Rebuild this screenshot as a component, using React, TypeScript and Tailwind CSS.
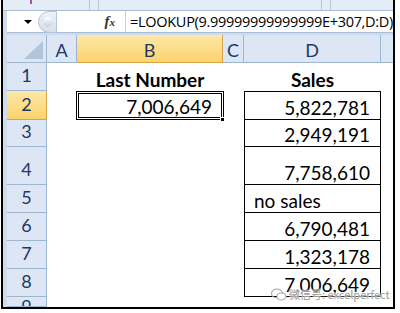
import React from "react";

const hdr = "flex items-center justify-center bg-[#dce6f4] border-r border-b border-[#9eb6ce] text-[18px] text-[#1f3864]";
const sel = "flex items-center justify-center bg-gradient-to-b from-[#fde8a6] to-[#fbd36b] border-r border-b border-[#d9a54a] text-[18px] text-[#1f3864]";
const cell = "flex items-end text-[19px] text-black leading-none pb-[2px]";
const dCell = "flex items-end justify-end pr-[10px] border-x border-b border-black text-[19px] text-black leading-none pb-[2px]";

const rows = [
  { n: "1", h: "h-[28px]" },
  { n: "2", h: "h-[29px]" },
  { n: "3", h: "h-[27px]" },
  { n: "4", h: "h-[38px]" },
  { n: "5", h: "h-[28px]" },
  { n: "6", h: "h-[28px]" },
  { n: "7", h: "h-[28px]" },
  { n: "8", h: "h-[28px]" },
];

const sales: Record<string, string> = {
  "2": "5,822,781",
  "3": "2,949,191",
  "4": "7,758,610",
  "5": "no sales",
  "6": "6,790,481",
  "7": "1,323,178",
  "8": "7,006,649",
};

const App: React.FC = () => {
  return (
    <div className="w-[400px] h-[313px] bg-white overflow-hidden" style={{ fontFamily: "Lato, 'Liberation Sans', sans-serif" }}>
      <div className="relative ml-[1px] w-[394px] h-[309px] border-l-2 border-r-2 border-b-2 border-black bg-[#cfdcee] flex flex-col overflow-hidden">
        {/* ribbon remnant */}
        <div className="h-[11px] flex bg-[#e4ecf7] border-b border-[#a9bdd6]">
          <div className="w-[27px]" />
          <div className="w-[2px] h-[4px] bg-[#9a5aa8]" />
          <div className="w-[57px]" />
          <div className="w-px h-[10px] bg-[#b7c8dd]" />
          <div className="w-[8px]" />
          <div className="w-px h-[10px] bg-[#b7c8dd]" />
          <div className="w-[222px]" />
          <div className="w-px h-[10px] bg-[#b7c8dd]" />
          <div className="w-[8px]" />
          <div className="w-px h-[10px] bg-[#b7c8dd]" />
        </div>

        {/* formula bar */}
        <div className="h-[22px] flex bg-white border-b border-[#a9bdd6] ml-[4px]">
          <div className="w-[31px] flex items-center justify-end pr-[6px]">
            <div className="w-0 h-0 border-l-[4px] border-r-[4px] border-t-[4px] border-l-transparent border-r-transparent border-t-black" />
          </div>
          <div className="w-[19px] h-[22px] rounded-l-full bg-gradient-to-b from-[#eef2f8] to-[#d6dfeb] border border-[#b5c4d8] flex items-center pl-[4px]">
            <div className="w-[10px] h-[10px] rounded-full bg-gradient-to-b from-[#ffffff] to-[#c6d1df]" />
          </div>
          <div className="w-[69px] flex items-center justify-end pr-[10px]">
            <span className="text-[15px] italic font-bold text-[#333]" style={{ fontFamily: "'Liberation Serif', serif" }}>
              f<span className="text-[11px]">x</span>
            </span>
          </div>
          <div className="w-px bg-[#c5d2e2]" />
          <div className="flex-1 flex items-center pl-[4px] text-[14.5px] text-black whitespace-nowrap" style={{ fontFamily: "'Open Sans', sans-serif", letterSpacing: "-0.3px" }}>
            =LOOKUP(9.99999999999999E+307,D:D)
          </div>
        </div>

        <div className="h-[2px]" />

        {/* grid */}
        <div className="ml-[4px] flex-1 grid grid-cols-[40px_30px_146px_21px_137px_1fr] bg-white content-start">
          {/* header row */}
          <div className="h-[28px] bg-[#dce6f4] border-r border-b border-[#9eb6ce] flex items-end justify-end pr-[3px] pb-[3px]">
            <svg width="19" height="18" viewBox="0 0 19 18">
              <polygon points="19,0 19,18 0,18" fill="#b3c4d9" />
            </svg>
          </div>
          <div className={`${hdr} h-[28px] pt-[3px]`}>A</div>
          <div className={`${sel} h-[28px] pt-[3px]`}>B</div>
          <div className={`${hdr} h-[28px] pt-[3px]`}>C</div>
          <div className={`${hdr} h-[28px] pt-[3px]`}>D</div>
          <div className={`${hdr} h-[28px] border-r-0`} />

          {rows.map((r) => (
            <React.Fragment key={r.n}>
              <div className={`${r.n === "2" ? sel : hdr} ${r.h} items-end pb-[1px]`}>{r.n}</div>
              <div className={r.h} />
              {r.n === "1" ? (
                <div className={`${cell} ${r.h} justify-center font-bold`}>Last Number</div>
              ) : r.n === "2" ? (
                <div className={`${r.h} relative`}>
                  <div className="absolute -left-px top-0 w-[148px] h-[29px] border-[3px] border-double border-black flex items-end justify-end pr-[9px] pb-[1px] text-[19px] leading-none">
                    7,006,649
                  </div>
                  <div className="absolute left-[143px] top-[26px] w-[5px] h-[5px] bg-black border border-white" />
                </div>
              ) : (
                <div className={r.h} />
              )}
              <div className={r.h} />
              {r.n === "1" ? (
                <div className={`${cell} ${r.h} justify-center font-bold`}>Sales</div>
              ) : (
                <div className={`${dCell} ${r.h} ${r.n === "2" ? "border-t" : ""} ${r.n === "5" ? "justify-start pl-[9px] pr-0" : ""}`}>
                  {sales[r.n]}
                </div>
              )}
              <div className={r.h} />
            </React.Fragment>
          ))}
          <div className={`${hdr} h-[10px] items-start overflow-hidden`}>
            <span className="leading-none">9</span>
          </div>
        </div>

        {/* watermark */}
        <div className="absolute left-[268px] top-[288px] flex items-center gap-[2px] text-[#9a9a9a]" style={{ textShadow: "0 0 2px #fff, 0 0 2px #fff" }}>
          <svg width="16" height="13" viewBox="0 0 16 13">
            <ellipse cx="6" cy="5.5" rx="5.5" ry="4.5" fill="none" stroke="#aaa" strokeWidth="1.1" />
            <ellipse cx="10.5" cy="8.5" rx="4.5" ry="3.5" fill="#fff" stroke="#aaa" strokeWidth="1.1" />
          </svg>
          <span className="text-[11px] whitespace-nowrap leading-none" style={{ fontFamily: "'Noto Sans CJK SC', sans-serif" }}>
            微信号: excelperfect
          </span>
        </div>
      </div>
    </div>
  );
};

export default App;
